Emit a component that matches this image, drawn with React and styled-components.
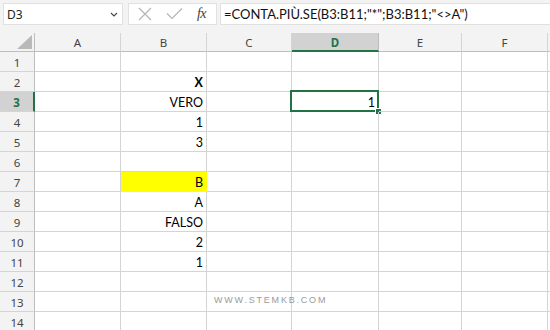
import React from 'react';
import styled, { createGlobalStyle, css } from 'styled-components';

const GREEN = '#217346';
const GRID = '#d4d4d4';
const HEAD_LINE = '#bdbdbd';

const GlobalStyle = createGlobalStyle`
  html, body {
    margin: 0;
    padding: 0;
    background: #ffffff;
    overflow: hidden;
  }
`;

const Frame = styled.div`
  position: relative;
  width: 550px;
  height: 330px;
  overflow: hidden;
  background: #f3f3f3;
`;

const FormulaBar = styled.div`
  display: flex;
  align-items: flex-start;
  height: 33px;
  padding: 3px 0 0 3px;
  box-sizing: border-box;
`;

const Box = styled.div`
  display: flex;
  align-items: center;
  height: 22px;
  box-sizing: border-box;
  background: #ffffff;
  border: 1px solid #e1e1e1;
`;

const NameBox = styled(Box)`
  width: 120px;
  padding: 0 4px 0 3px;
  justify-content: space-between;
  font-family: 'Noto Sans', sans-serif;
  font-size: 12px;
  color: #222;
`;

const ActionBox = styled(Box)`
  width: 89px;
  margin-left: 5px;
  padding: 0 10px 0 9px;
  justify-content: space-between;
`;

const Fx = styled.span`
  font-family: 'Liberation Serif', serif;
  font-style: italic;
  font-size: 14px;
  color: #404040;
  letter-spacing: -0.5px;
`;

const FormulaInput = styled(Box)`
  flex: 1;
  margin-left: 3px;
  padding-left: 3px;
  border-right: none;
  font-family: 'Lato', sans-serif;
  font-size: 13px;
  color: #111;
  white-space: nowrap;
`;

const Sheet = styled.div`
  display: grid;
  grid-template-columns: 35px 86px 86px 85px 87px 83px 86px 40px;
  grid-template-rows: 19px repeat(14, 20px);
  background: #ffffff;
`;

const Corner = styled.div`
  position: relative;
  background: #f3f3f3;
  border-right: 1px solid ${HEAD_LINE};
  border-bottom: 1px solid ${HEAD_LINE};
  box-sizing: border-box;

  &::after {
    content: '';
    position: absolute;
    right: 2px;
    bottom: 2px;
    border-style: solid;
    border-width: 0 0 14px 15px;
    border-color: transparent transparent #b9b9b9 transparent;
  }
`;

const ColHead = styled.div`
  display: flex;
  align-items: center;
  justify-content: center;
  box-sizing: border-box;
  background: ${({ active }) => (active ? '#d2d2d2' : '#f3f3f3')};
  border-right: 1px solid ${({ active }) => (active ? '#bdbdbd' : GRID)};
  border-bottom: ${({ active }) => (active ? `2px solid ${GREEN}` : `1px solid ${HEAD_LINE}`)};
  font-family: 'Noto Sans', sans-serif;
  font-size: 11.5px;
  color: ${({ active }) => (active ? GREEN : '#444')};
  font-weight: ${({ active }) => (active ? 700 : 400)};
  padding-top: 1px;
`;

const RowHead = styled.div`
  display: flex;
  align-items: center;
  justify-content: center;
  box-sizing: border-box;
  background: ${({ active }) => (active ? '#d2d2d2' : '#f3f3f3')};
  border-bottom: 1px solid ${GRID};
  border-right: ${({ active }) => (active ? `2px solid ${GREEN}` : `1px solid ${HEAD_LINE}`)};
  font-family: 'Noto Sans', sans-serif;
  font-size: 11.5px;
  color: ${({ active }) => (active ? GREEN : '#444')};
  font-weight: ${({ active }) => (active ? 700 : 400)};
  padding-top: 1px;
`;

const Cell = styled.div`
  position: relative;
  display: flex;
  align-items: center;
  justify-content: flex-end;
  box-sizing: border-box;
  padding: 2px 3px 0 3px;
  border-right: 1px solid ${GRID};
  border-bottom: 1px solid ${GRID};
  font-family: 'Lato', sans-serif;
  font-size: 12.5px;
  color: #000;
  font-weight: ${({ bold }) => (bold ? 700 : 400)};
  ${({ fill }) =>
    fill &&
    css`
      background: ${fill};
      border-color: ${fill};
    `}
`;

const Selection = styled.div`
  position: absolute;
  left: -2px;
  top: -2px;
  right: -1px;
  bottom: -1px;
  border: 2px solid ${GREEN};
  pointer-events: none;

  &::after {
    content: '';
    position: absolute;
    right: -4px;
    bottom: -4px;
    width: 5px;
    height: 5px;
    background: ${GREEN};
    border-left: 1px solid #fff;
    border-top: 1px solid #fff;
  }
`;

const Watermark = styled.div`
  position: absolute;
  left: 214px;
  top: 295px;
  font-family: 'Liberation Sans', sans-serif;
  font-size: 9px;
  letter-spacing: 1.8px;
  color: #9a9a9a;
`;

const Chevron = () => (
  <svg width="8" height="5" viewBox="0 0 8 5">
    <path d="M1 1 L4 4 L7 1" fill="none" stroke="#444" strokeWidth="1.1" />
  </svg>
);

const CancelIcon = () => (
  <svg width="14" height="14" viewBox="0 0 14 14">
    <path d="M1 1 L13 13 M13 1 L1 13" stroke="#b4b4b4" strokeWidth="1.1" fill="none" />
  </svg>
);

const CheckIcon = () => (
  <svg width="17" height="12" viewBox="0 0 17 12">
    <path d="M1 5.5 L6 10.5 L16 0.5" stroke="#b4b4b4" strokeWidth="1.1" fill="none" />
  </svg>
);

const COLS = ['A', 'B', 'C', 'D', 'E', 'F', 'G'];

const data = {
  B2: { v: 'X', bold: true },
  B3: { v: 'VERO' },
  B4: { v: '1' },
  B5: { v: '3' },
  B7: { v: 'B', fill: '#ffff00' },
  B8: { v: 'A' },
  B9: { v: 'FALSO' },
  B10: { v: '2' },
  B11: { v: '1' },
  D3: { v: '1' },
};

const ACTIVE = { col: 'D', row: 3 };

const App = () => {
  const rows = Array.from({ length: 14 }, (_, i) => i + 1);

  return (
    <Frame>
      <GlobalStyle />
      <FormulaBar>
        <NameBox>
          <span>D3</span>
          <Chevron />
        </NameBox>
        <ActionBox>
          <CancelIcon />
          <CheckIcon />
          <Fx>fx</Fx>
        </ActionBox>
        <FormulaInput>=CONTA.PIÙ.SE(B3:B11;"*";B3:B11;"&lt;&gt;A")</FormulaInput>
      </FormulaBar>

      <Sheet>
        <Corner />
        {COLS.map((c) => (
          <ColHead key={c} active={c === ACTIVE.col}>
            {c === 'G' ? '' : c}
          </ColHead>
        ))}
        {rows.map((r) => (
          <React.Fragment key={r}>
            <RowHead active={r === ACTIVE.row}>{r}</RowHead>
            {COLS.map((c) => {
              const cell = data[`${c}${r}`] || {};
              const selected = c === ACTIVE.col && r === ACTIVE.row;
              return (
                <Cell key={c} bold={cell.bold} fill={cell.fill}>
                  {cell.v}
                  {selected && <Selection />}
                </Cell>
              );
            })}
          </React.Fragment>
        ))}
      </Sheet>

      <Watermark>WWW.STEMKB.COM</Watermark>
    </Frame>
  );
};

export default App;
